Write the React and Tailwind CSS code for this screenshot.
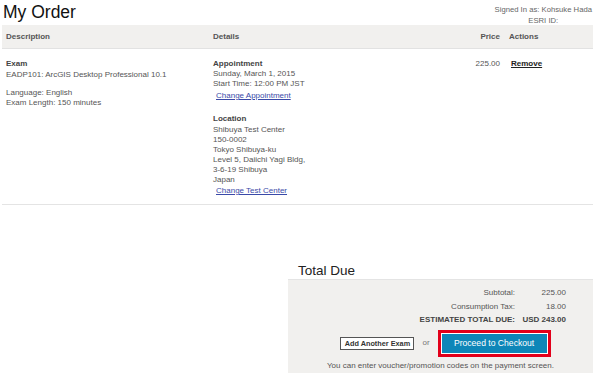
import React from "react";

const locationLines = [
  "Shibuya Test Center",
  "150-0002",
  "Tokyo Shibuya-ku",
  "Level 5, Daiichi Yagi Bldg,",
  "3-6-19 Shibuya",
  "Japan",
];

export default function App() {
  return (
    <div className="w-[600px] h-[379px] overflow-hidden bg-white font-['Liberation_Sans',Arial,sans-serif] text-[8px] leading-[10px] text-[#555]">
      {/* Title + user */}
      <div className="flex justify-between pl-[3px] pr-[8px] h-[25px]">
        <h1 className="text-[17.5px] leading-[22px] pt-[1px] text-[#111]">My Order</h1>
        <div className="text-center text-[7.7px] leading-[11px] text-[#666] pt-[4px]">
          Signed In as: Kohsuke Hada
          <br />
          ESRI ID:
        </div>
      </div>

      {/* Table header */}
      <div className="ml-[2px] w-[591px] h-[24px] bg-[#f1f0ee] border-b border-[#e2e2e2] grid grid-cols-[211px_247px_40px_93px] items-center font-bold text-[#555]">
        <div className="pl-[4px]">Description</div>
        <div>Details</div>
        <div className="text-right">Price</div>
        <div className="pl-[9px]">Actions</div>
      </div>

      {/* Order row */}
      <div className="ml-[2px] w-[591px] grid grid-cols-[211px_247px_40px_93px] pt-[10px] pb-[8px] border-b border-[#e4e4e4]">
        <div className="pl-[4px]">
          <div className="font-bold text-[#444]">Exam</div>
          <div className="mt-[1px]">EADP101: ArcGIS Desktop Professional 10.1</div>
          <div className="mt-[8px]">Language: English</div>
          <div>Exam Length: 150 minutes</div>
        </div>
        <div>
          <div className="font-bold text-[#444]">Appointment</div>
          <div>Sunday, March 1, 2015</div>
          <div>Start Time: 12:00 PM JST</div>
          <a className="block mt-[2px] pl-[3px] text-[#3a4aa8] underline">
            Change Appointment
          </a>
          <div className="mt-[13px] font-bold text-[#444]">Location</div>
          <div className="mt-[1px]">
            {locationLines.map((l) => (
              <div key={l}>{l}</div>
            ))}
          </div>
          <a className="block mt-[1px] pl-[3px] text-[#3a4aa8] underline">
            Change Test Center
          </a>
        </div>
        <div className="text-right">225.00</div>
        <div className="pl-[11px]">
          <a className="font-bold text-[#222] underline">Remove</a>
        </div>
      </div>

      {/* Total due */}
      <div className="flex justify-end pr-[7px] mt-[58px]">
        <div className="w-[305px]">
          <h2 className="pl-[10px] text-[13.5px] leading-[16px] text-[#222]">Total Due</h2>
          <div className="bg-[#f1f0ee] border-t border-[#e4e4e4] pt-[6px] pb-[2px]">
            <div className="grid grid-cols-[1fr_51px] pr-[27px] leading-[13.5px] text-right">
              <div>Subtotal:</div>
              <div>225.00</div>
              <div>Consumption Tax:</div>
              <div>18.00</div>
              <div className="font-bold text-[#444]">ESTIMATED TOTAL DUE:</div>
              <div className="font-bold text-[#444]">USD 243.00</div>
            </div>
            <div className="flex items-center justify-center pl-[10px] mt-[3px]">
              <button className="h-[13px] w-[74px] bg-white border border-[#555] text-[7.3px] font-bold text-[#333] leading-[11px]">
                Add Another Exam
              </button>
              <span className="mx-[8px] text-[#777]">or</span>
              <div className="border-[3px] border-[#e2001a] bg-white p-[1px]">
                <button className="h-[19px] w-[105px] bg-[#0e86b8] text-white text-[8.6px] leading-[19px]">
                  Proceed to Checkout
                </button>
              </div>
            </div>
            <div className="text-center mt-[4px]">
              You can enter voucher/promotion codes on the payment screen.
            </div>
          </div>
        </div>
      </div>
    </div>
  );
}
